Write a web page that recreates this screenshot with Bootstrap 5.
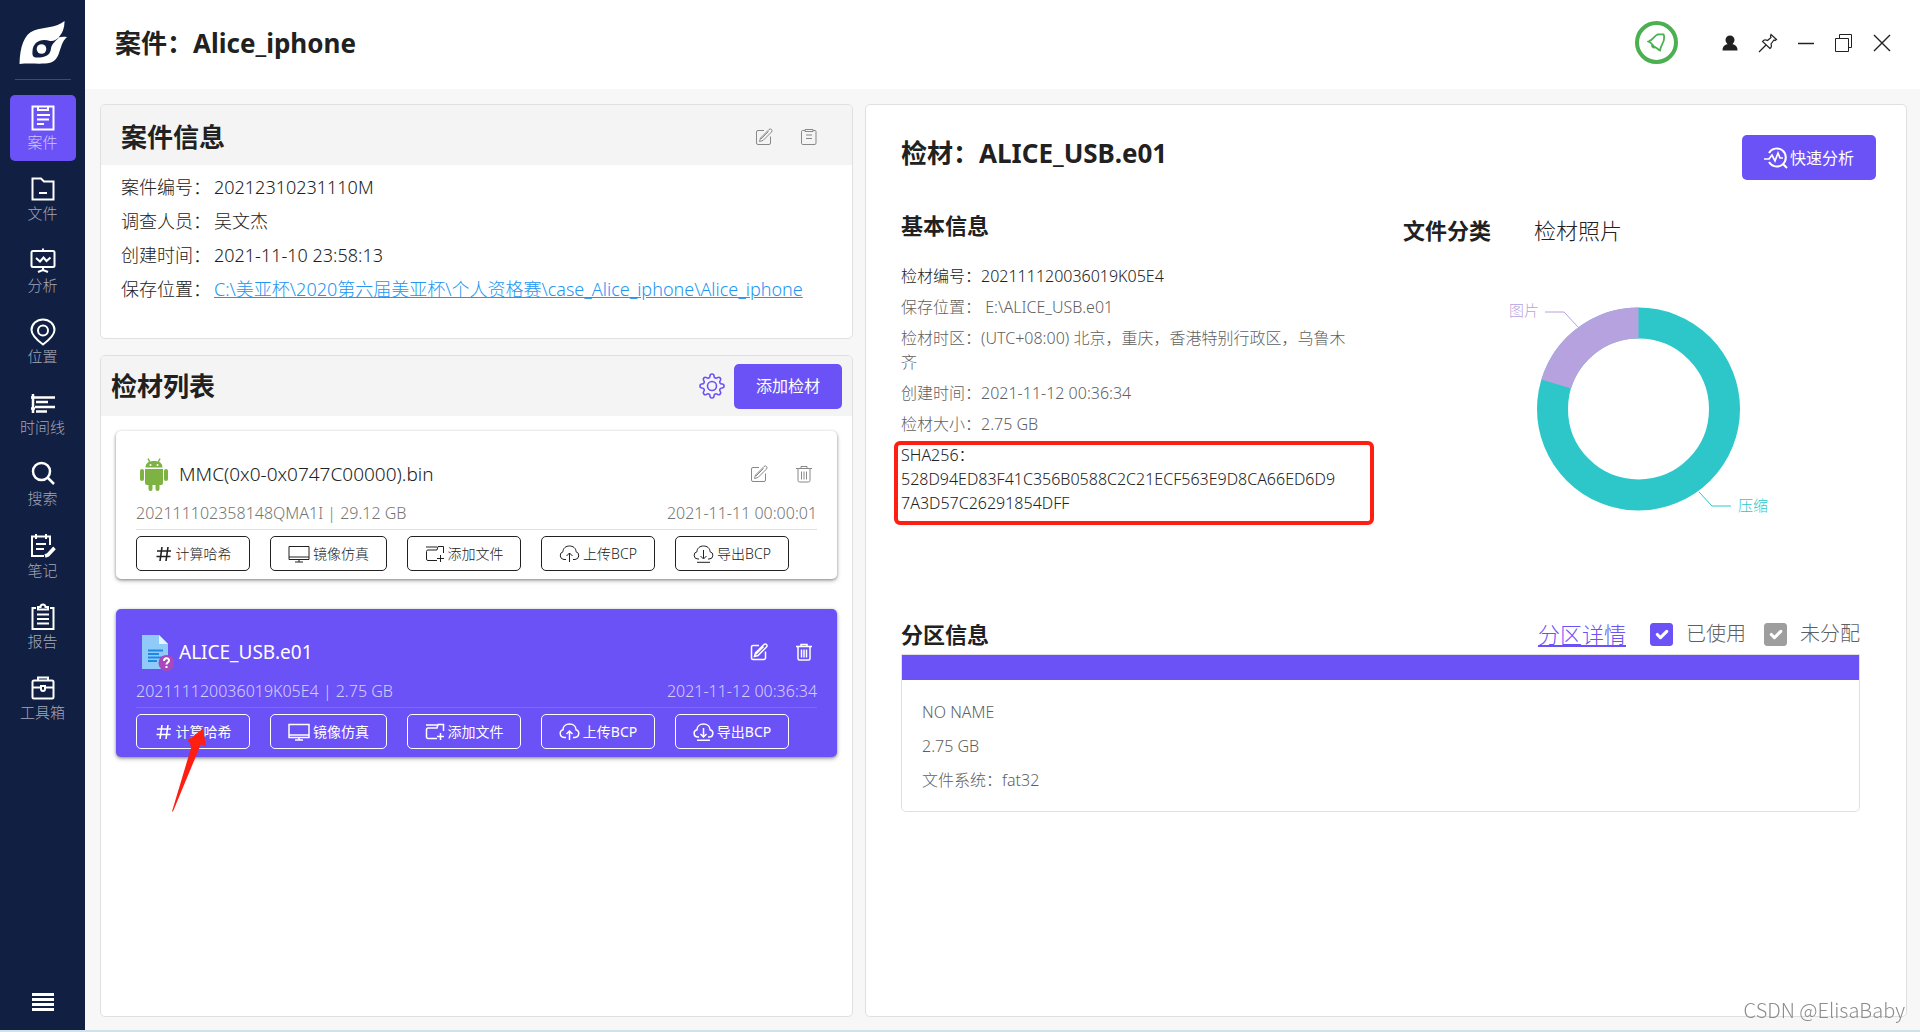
<!DOCTYPE html>
<html lang="zh-CN">
<head>
<meta charset="utf-8">
<meta name="viewport" content="width=device-width, initial-scale=1">
<title>案件：Alice_iphone</title>
<link rel="stylesheet" href="https://cdn.jsdelivr.net/npm/bootstrap@5.3.0/dist/css/bootstrap.min.css">
<style>
:root{--violet:#6b52f7;--navy:#111f42;--ink:#212121;--soft:#5f5f5f;--line:#e0e0e0}
body{font-family:"Noto Sans","Noto Sans CJK SC",sans-serif;font-weight:300;color:var(--ink);background:#f7f7f7;font-size:16px;line-height:24px}
svg{display:block;flex:none}
svg:not([fill]){fill:none}
svg:not([stroke]){stroke:currentColor}
h1,h2,h3,p{margin:0}
.shell{min-height:calc(100vh - 2px)}
.rail{width:85px;flex:none;background:var(--navy);padding:20px 9px 18px}
.rail-rule{width:56px;height:1px;background:#3b4a78;margin:14px 0 15px}
.rail-list{height:636px}
.rail-item{height:66px;width:66px;border-radius:5px;color:#fff;text-decoration:none;font-size:15px;line-height:20px;padding-top:9px}
.rail-item span{color:#a3a8b8}
.rail-item.active{background:var(--violet)}
.rail-item.active span{color:#d0c8fc}
.plain-btn{background:none;border:0;padding:0;color:inherit}
.topbar{height:89px;background:#fff;padding:0 28px 4px 30px}
.page-title{font-size:26px;line-height:36px;font-weight:700}
.bell{width:43px;height:43px;border:4px solid #4caf50;border-radius:50%;color:#4caf50}
.win-tools{gap:18px;margin-left:42px}
.board{display:grid;grid-template-columns:73fr 101fr;gap:12px;padding:15px 13px 13px 15px}
.panel{background:#fff;border:1px solid var(--line);border-radius:5px;overflow:hidden}
.panel-top{height:60px;background:#f4f4f4}
.case-top{padding:4px 34px 0 20px}
.case-info{font-size:18px;line-height:34px;padding:5px 20px 32px}
.case-info dt{font-weight:300;width:93px}
.case-info dd{margin:0}
.path-link{color:#2196f3}
.list-head{padding:0 10px}
.gear-btn{margin-right:8px}
.violet-btn{background:var(--violet);color:#fff;border:0;border-radius:5px;height:45px;font-size:16px;font-weight:400}
.violet-btn:hover{background:#5a40ea;color:#fff}
.add-btn{width:108px}
.device-list{padding:15px;gap:30px}
.device{height:148px;border-radius:5px;background:#fff;box-shadow:0 1px 3px rgba(0,0,0,.35),0 2px 5px rgba(0,0,0,.2);padding:24px 20px 8px}
.device.picked{background:var(--violet);color:#fff;font-weight:400}
.device-name{font-size:19px;line-height:38px;height:38px}
.name-icon{margin:0 9px 0 2px}
.picked .name-icon{margin-right:5px}
.device-meta{color:#757575;height:37px;padding-top:8px;border-bottom:1px solid var(--line);font-size:16px;font-weight:300}
.device-tools{color:#888}
.device .device-tools{padding-right:4px}
.tool-gap{margin-right:27px}
.picked .device-meta{color:#d6cffd;border-color:#7d68f8}
.picked .device-tools{color:#fff}
.op-row{gap:20px;padding-top:6px}
.op-btn{height:35px;width:114px;border:1px solid var(--ink);border-radius:5px;background:none;color:inherit;padding:0;font-size:14px;gap:3px;font-weight:inherit}
.op-btn.op-wide{width:117px}
.picked .op-btn{border-color:#fff}
.red-arrow{left:55px;top:119px}
.detail{padding:30px 30px 30px 35px}
.quick-btn{width:134px;padding:0;gap:2px}
.sub-title{font-size:22px;line-height:30px;font-weight:700}
.facts-row{margin-top:30px}
.facts{color:var(--soft);margin-top:24px}
.facts p{margin-bottom:7px}
.facts .dark{color:var(--ink)}
.facts-box{width:455px}
.hash-frame{left:-7px;right:-18px;top:-2px;bottom:-10px;border:4px solid #ff1e12;border-radius:6px}
.chart-box{margin-left:47px;padding-top:5px}
.tab-row{gap:43px}
.tab-link{font-size:22px;line-height:30px;color:var(--ink);background:none;border:0;padding:0}
.donut{margin:55px 0 0 97px}
.chart-label{font-size:15px;stroke:none}
.part-head{margin-right:16px;height:40px;margin-top:92px}
.part-link{font-size:22px;color:var(--violet)}
.part-check{font-size:20px;color:var(--soft);gap:13px;margin-left:24px}
.part-check.part-last{margin-left:18px}
.part-check .form-check-input{width:23px;height:23px;margin:0;border-radius:3px}
.part-check .form-check-input:checked{background-color:var(--violet);border-color:var(--violet)}
.part-check .form-check-input.muted-check:checked{background-color:#9e9e9e;border-color:#9e9e9e}
.part-box{border:1px solid var(--line);border-radius:0 0 5px 5px;margin-right:16px;color:var(--soft);line-height:34px}
.part-bar{height:25px;background:var(--violet)}
.part-text{padding:15px 20px 14px}
.watermark{right:15px;bottom:9px;font-size:20px;line-height:26px;color:#8c8c8c;font-family:"Noto Sans CJK SC",sans-serif}
.taskbar{height:2px;background:#cfe2ea}
</style>
</head>
<body>
<svg width="0" height="0" class="position-absolute" aria-hidden="true">
<defs>
<symbol id="edit" viewBox="0 0 18 18"><path d="M9 2.500H3A1.500 1.500 0 0 0 1.500 4v11A1.500 1.500 0 0 0 3 16.500h11a1.500 1.500 0 0 0 1.500-1.500V8.500M4.500 13.500l1-3.500 8.500-8.500a1.700 1.700 0 0 1 2.500 2.500L8 12.500zM6 11l7.500-7.500"/></symbol>
<symbol id="trash" viewBox="0 0 18 18"><path d="M1 3.500h16M6 3V1.500h6V3M3 4v11.500A1.500 1.500 0 0 0 4.500 17h9a1.500 1.500 0 0 0 1.500-1.500V4M6.500 6.500v8M9 6.500v8M11.500 6.500v8"/></symbol>
<symbol id="hash" viewBox="0 0 18 18"><path d="M7 2 5 16M13 2l-2 14M2 6h14M1.500 11.500h14" stroke-width="1.600"/></symbol>
<symbol id="screen" viewBox="0 0 22 18"><path d="M1 1.500h20v13H1zM1 12h20M11 14.500V17M7 17h8"/></symbol>
<symbol id="addfile" viewBox="0 0 20 18"><path d="M1 2h11M12 15.500H3A1.500 1.500 0 0 1 1.500 14V6.500A1.500 1.500 0 0 1 3 5h9l1-3.500h5.500V8M15.500 10v7M12 13.500h7"/></symbol>
<symbol id="cloudup" viewBox="0 0 21 18"><path d="M7 14.500H5a4 4 0 0 1-1-7.800C4 3 7 1 10.500 1S17 3 17 6.700a4 4 0 0 1-1 7.800h-2M10.500 17V8M7.500 11l3-3 3 3"/></symbol>
<symbol id="clouddown" viewBox="0 0 21 18"><path d="M6 14H5a3.700 3.700 0 0 1-1-7.300C4 3 7 1 10.500 1S17 3 17 6.700a3.700 3.700 0 0 1-1 7.300h-1M10.500 5v8.500M7.500 11l3 3 3-3M4 17.300h13"/></symbol>
</defs>
</svg>
<div class="shell d-flex">
<nav class="rail d-flex flex-column align-items-center">
  <svg width="50" height="45" viewBox="18 21 50 45" stroke="none"><path fill="#fff" d="M19.500 65C20 48 24 35 34 31.500 44 28 56 29 64.500 22c0 7-2 12-6 16.500 3-1 5.500-1 8.500-.5-5 4-6 11-8.500 17.500C56 61 53 64 45 64.500c-8 .5-17-.5-25.500.5z"/><path fill="#111f42" d="M59 38.500c-3 2-5 4-9 3.500-9-3-17 1-17.500 10-.5 6 1 7 7 6.500 8-.5 11-4 11.500-9 .5-4 4-7 8-11z"/><circle cx="41.500" cy="50" r="4.800" fill="#fff"/></svg>
  <div class="rail-rule"></div>
  <div class="rail-list d-flex flex-column justify-content-between text-center">
    <a href="#" class="rail-item active d-flex flex-column align-items-center"><svg width="26" height="28" viewBox="0 0 26 28" stroke-width="2"><path d="M2.500 2.500h21v23h-21zM8 3v3h10V3M7 11h13M7 15.500h12M7 20h7"/></svg><span>案件</span></a>
    <a href="#" class="rail-item d-flex flex-column align-items-center"><svg width="26" height="28" viewBox="0 0 26 28" stroke-width="2"><path d="M2.500 3.500h8.500l3 3h9.500v18h-21zM9 18h8"/></svg><span>文件</span></a>
    <a href="#" class="rail-item d-flex flex-column align-items-center"><svg width="26" height="28" viewBox="0 0 26 28" stroke-width="2"><rect x="1.500" y="4" width="23" height="16" rx="1.500"/><path d="m6 11 4 3.500 3.500-4 3 3.500 4-3.500M13 1.500V4M13 20v4M8 25l5-2 5 2"/></svg><span>分析</span></a>
    <a href="#" class="rail-item d-flex flex-column align-items-center"><svg width="26" height="28" viewBox="0 0 26 28" stroke-width="2"><path d="M13 26.500C7 22 1.500 17 1.500 12a11.500 10.500 0 0 1 23 0c0 5-5.500 10-11.500 14.500z"/><circle cx="13" cy="12.500" r="5"/></svg><span>位置</span></a>
    <a href="#" class="rail-item d-flex flex-column align-items-center"><svg width="26" height="28" viewBox="0 0 26 28" stroke-width="2.500"><path d="M3 5v19M1 8.500h5M1 19.500h4M5 8.500h20M6 13h12M5 18h20M6 22.500h11"/></svg><span>时间线</span></a>
    <a href="#" class="rail-item d-flex flex-column align-items-center"><svg width="26" height="28" viewBox="0 0 26 28" stroke-width="2.500"><circle cx="11.500" cy="11.500" r="8.500"/><path d="m17.500 17.500 6.500 6.500"/></svg><span>搜索</span></a>
    <a href="#" class="rail-item d-flex flex-column align-items-center"><svg width="26" height="28" viewBox="0 0 26 28" stroke-width="2"><path d="M20 13V4.500H2V24h12M6 2v5M16 2v5M6 12h10M6 17h8M17 23l7-7.500" /><path d="m15 24 3-1 6.500-7" stroke-width="3.500"/></svg><span>笔记</span></a>
    <a href="#" class="rail-item d-flex flex-column align-items-center"><svg width="26" height="28" viewBox="0 0 26 28" stroke-width="2"><path d="M6 5H2.500v21h21V5H20M8 6.500V4h2.500a2.500 2.500 0 0 1 5 0H18v2.500zM7 11.500h12M7 16h12M7 20.500h12"/></svg><span>报告</span></a>
    <a href="#" class="rail-item d-flex flex-column align-items-center"><svg width="26" height="28" viewBox="0 0 26 28" stroke-width="2"><rect x="2.500" y="6.500" width="21" height="18" rx="1.500"/><path d="M8 6V3.500h10V6M3 13.500h8M15 13.500h8M11 12v3a2 2 0 0 0 4 0v-3z"/></svg><span>工具箱</span></a>
  </div>
  <button class="plain-btn text-white mt-auto" aria-label="菜单"><svg width="22" height="20" viewBox="0 0 22 20" stroke-width="3"><path d="M0 2.500h22M0 7.500h22M0 12.500h22M0 17.500h22"/></svg></button>
</nav>
<div class="flex-grow-1 d-flex flex-column">
  <header class="topbar d-flex align-items-center">
    <h1 class="page-title me-auto">案件：Alice_iphone</h1>
    <button class="plain-btn bell d-flex align-items-center justify-content-center" aria-label="通知"><svg width="19" height="19" viewBox="0 0 19 19" stroke-width="1.800"><path d="M1.500 8.500C6 7 7 3 10.500 1.500 14 1 15 1.500 16.500 1.500c1 1 .5 2.500.5 4.500 0 4-3 5-4 11.500-2-1-3-2.500-5-3.500-2.500-.5-1.500-3-6.500-5.500zM5 12c0 2 1 3 3 2.500"/></svg></button>
    <div class="win-tools d-flex align-items-center">
      <button class="plain-btn" aria-label="用户"><svg width="20" height="20" viewBox="0 0 20 20" stroke="none" fill="#212121"><circle cx="10" cy="7" r="4.500"/><path d="M2.500 17.500c0-5 3-6.500 7.500-6.500s7.500 1.500 7.500 6.500z"/></svg></button>
      <button class="plain-btn" aria-label="固定"><svg width="20" height="20" viewBox="0 0 20 20" stroke-width="1.200"><path d="m13 1.500 5.500 5-1.500 1-1-.5-3 4c1 2 0 4-1 4.500L4.500 8.500c1-1.500 3-2 5-1l3.500-3-.5-1.500zM8 12l-7 7"/></svg></button>
      <button class="plain-btn" aria-label="最小化"><svg width="20" height="20" viewBox="0 0 20 20"><path d="M2 10.500h16" stroke-width="1.500"/></svg></button>
      <button class="plain-btn" aria-label="还原"><svg width="20" height="20" viewBox="0 0 20 20"><path d="M1.500 5.500h13v13h-13zM5.500 5V1.500h12v13H15"/></svg></button>
      <button class="plain-btn" aria-label="关闭"><svg width="20" height="20" viewBox="0 0 20 20" stroke-width="1.400"><path d="m2 2 16 16M18 2 2 18"/></svg></button>
    </div>
  </header>
  <main class="board flex-grow-1">
    <div class="d-flex flex-column gap-3">
      <section class="panel">
        <div class="panel-top case-top d-flex align-items-center">
          <h2 class="page-title me-auto">案件信息</h2>
          <div class="device-tools d-flex">
            <button class="plain-btn tool-gap" aria-label="编辑"><svg width="18" height="18"><use href="#edit"/></svg></button>
            <button class="plain-btn" aria-label="复制"><svg width="18" height="18" viewBox="0 0 18 18"><path d="M5 2.500H2.500A1 1 0 0 0 1.500 3.500v12a1.500 1.500 0 0 0 1.500 1h12a1.500 1.500 0 0 0 1-1.500V3.500a1 1 0 0 0-1-1H13M5 1.500h8v2H5zM6 7h6M6 10.500h6"/></svg></button>
          </div>
        </div>
        <dl class="case-info mb-0">
          <div class="d-flex"><dt>案件编号：</dt><dd>20212310231110M</dd></div>
          <div class="d-flex"><dt>调查人员：</dt><dd>吴文杰</dd></div>
          <div class="d-flex"><dt>创建时间：</dt><dd>2021-11-10 23:58:13</dd></div>
          <div class="d-flex"><dt>保存位置：</dt><dd><a href="#" class="path-link">C:\美亚杯\2020第六届美亚杯\个人资格赛\case_Alice_iphone\Alice_iphone</a></dd></div>
        </dl>
      </section>
      <section class="panel flex-grow-1">
        <div class="panel-top list-head d-flex align-items-center">
          <h2 class="page-title me-auto">检材列表</h2>
          <button class="plain-btn gear-btn" aria-label="设置"><svg width="28" height="28" viewBox="0 0 28 28" stroke="#6b52f7" stroke-width="1.600"><circle cx="14" cy="14" r="4.500"/><path d="M12 4a2 2 0 0 1 4 0c0 2 2 3 3.500 1.700a2 2 0 0 1 2.800 2.800C21 10 22 12 24 12a2 2 0 0 1 0 4c-2 0-3 2-1.700 3.500a2 2 0 0 1-2.800 2.800C18 21 16 22 16 24a2 2 0 0 1-4 0c0-2-2-3-3.500-1.700a2 2 0 0 1-2.800-2.800C7 18 6 16 4 16a2 2 0 0 1 0-4c2 0 3-2 1.700-3.500a2 2 0 0 1 2.800-2.800C10 7 12 6 12 4z"/></svg></button>
          <button class="btn violet-btn add-btn">添加检材</button>
        </div>
        <div class="device-list d-flex flex-column">
          <article class="device">
            <div class="device-name d-flex align-items-center">
              <svg class="name-icon" width="32" height="38" viewBox="0 0 32 38" stroke="none" fill="#7cb342"><path d="M7.500 12.500C7.500 8 11 6 16 6s8.500 2 8.500 6.500zM7 14h18v14a2 2 0 0 1-2 2H9a2 2 0 0 1-2-2zM10.500 29h4v5a2 2 0 0 1-4 0zM17.500 29h4v5a2 2 0 0 1-4 0z"/><rect x="2" y="14" width="4" height="12" rx="2"/><rect x="26" y="14" width="4" height="12" rx="2"/><path stroke="#7cb342" stroke-width="1.500" d="m10 3.500 2 4M22 3.500l-2 4"/><g fill="#fff"><circle cx="12.500" cy="10" r="1"/><circle cx="19.500" cy="10" r="1"/></g></svg>
              <span class="me-auto">MMC(0x0-0x0747C00000).bin</span>
              <div class="device-tools d-flex"><button class="plain-btn tool-gap" aria-label="编辑"><svg width="18" height="18"><use href="#edit"/></svg></button><button class="plain-btn" aria-label="删除"><svg width="18" height="18"><use href="#trash"/></svg></button></div>
            </div>
            <div class="device-meta d-flex justify-content-between"><span>202111102358148QMA1I | 29.12 GB</span><span>2021-11-11 00:00:01</span></div>
            <div class="op-row d-flex">
              <button class="op-btn d-flex align-items-center justify-content-center"><svg width="18" height="18"><use href="#hash"/></svg>计算哈希</button>
              <button class="op-btn op-wide d-flex align-items-center justify-content-center"><svg width="22" height="18"><use href="#screen"/></svg>镜像仿真</button>
              <button class="op-btn d-flex align-items-center justify-content-center"><svg width="20" height="18"><use href="#addfile"/></svg>添加文件</button>
              <button class="op-btn d-flex align-items-center justify-content-center"><svg width="21" height="18"><use href="#cloudup"/></svg>上传BCP</button>
              <button class="op-btn d-flex align-items-center justify-content-center"><svg width="21" height="18"><use href="#clouddown"/></svg>导出BCP</button>
            </div>
          </article>
          <article class="device picked position-relative">
            <div class="device-name d-flex align-items-center">
              <svg class="name-icon" width="36" height="38" viewBox="0 0 36 38" stroke="none"><path fill="#90caf9" d="M4 2h17l9 9v25H4z"/><path fill="#e1f5fe" d="M21 2v9h9z"/><path stroke="#1e88e5" stroke-width="1.800" d="M10 17.500h15M10 21h11M10 24.500h15M10 28h9"/><circle cx="28.500" cy="30" r="8" fill="#ab47bc"/><path stroke="#fff" stroke-width="2" d="M26 28c0-3.500 5-3.500 5-.5 0 2-2.500 2-2.500 4M28.500 33v2"/></svg>
              <span class="me-auto">ALICE_USB.e01</span>
              <div class="device-tools d-flex"><button class="plain-btn tool-gap" aria-label="编辑"><svg width="18" height="18" stroke-width="1.500"><use href="#edit"/></svg></button><button class="plain-btn" aria-label="删除"><svg width="18" height="18" stroke-width="1.500"><use href="#trash"/></svg></button></div>
            </div>
            <div class="device-meta d-flex justify-content-between"><span>202111120036019K05E4 | 2.75 GB</span><span>2021-11-12 00:36:34</span></div>
            <div class="op-row d-flex">
              <button class="op-btn d-flex align-items-center justify-content-center"><svg width="18" height="18"><use href="#hash"/></svg>计算哈希</button>
              <button class="op-btn op-wide d-flex align-items-center justify-content-center"><svg width="22" height="18" stroke-width="1.500"><use href="#screen"/></svg>镜像仿真</button>
              <button class="op-btn d-flex align-items-center justify-content-center"><svg width="20" height="18" stroke-width="1.500"><use href="#addfile"/></svg>添加文件</button>
              <button class="op-btn d-flex align-items-center justify-content-center"><svg width="21" height="18" stroke-width="1.500"><use href="#cloudup"/></svg>上传BCP</button>
              <button class="op-btn d-flex align-items-center justify-content-center"><svg width="21" height="18" stroke-width="1.500"><use href="#clouddown"/></svg>导出BCP</button>
            </div>
            <svg class="red-arrow position-absolute" width="36" height="84" viewBox="171 728 36 84" stroke="none" fill="#ff1e12"><path d="m203 728.500 3 18.500-5-3-28 67.500h-1L191 748l-1-5.500-3-1.500z"/></svg>
          </article>
        </div>
      </section>
    </div>
    <section class="panel detail">
      <div class="d-flex align-items-start justify-content-between">
        <h2 class="page-title">检材：ALICE_USB.e01</h2>
        <button class="btn violet-btn quick-btn d-flex align-items-center justify-content-center"><svg width="24" height="22" viewBox="0 0 24 22" stroke-width="2"><path d="M5 6a9 9 0 1 1 0 9M19 17l4 4"/><path d="M0 12h5l3-4 3 6 3-8 2 5h3" stroke-width="1.700"/></svg>快速分析</button>
      </div>
      <div class="d-flex facts-row">
        <div class="facts-box">
          <h3 class="sub-title">基本信息</h3>
          <div class="facts">
            <p class="dark">检材编号：202111120036019K05E4</p>
            <p>保存位置：&nbsp;E:\ALICE_USB.e01</p>
            <p>检材时区：(UTC+08:00) 北京，重庆，香港特别行政区，乌鲁木<br>齐</p>
            <p>创建时间：2021-11-12 00:36:34</p>
            <p>检材大小：2.75 GB</p>
            <p class="dark position-relative">SHA256：<br>528D94ED83F41C356B0588C2C21ECF563E9D8CA66ED6D9<br>7A3D57C26291854DFF<span class="hash-frame position-absolute"></span></p>
          </div>
        </div>
        <div class="chart-box">
          <div class="d-flex tab-row"><button class="tab-link fw-bold">文件分类</button><button class="tab-link fw-light">检材照片</button></div>
          <svg class="donut" width="290" height="220" viewBox="1500 300 290 220" role="img" aria-label="文件分类">
            <circle cx="1638.500" cy="409" r="86" stroke="#2ec7c9" stroke-width="31"/>
            <path d="M1638.500 323a86 86 0 0 0-82.300 61.100" stroke="#b6a2de" stroke-width="31"/>
            <path d="M1545 312h19l14 15" stroke="#b6a2de"/><path d="m1699 492 13 14h19" stroke="#2ec7c9"/>
            <text x="1509" y="316" class="chart-label" fill="#b6a2de">图片</text><text x="1738" y="511" class="chart-label" fill="#2ec7c9">压缩</text>
          </svg>
        </div>
      </div>
      <div class="d-flex align-items-center part-head">
        <h3 class="sub-title me-auto">分区信息</h3>
        <a href="#" class="part-link">分区详情</a>
        <label class="part-check d-flex align-items-center"><input type="checkbox" class="form-check-input" checked>已使用</label>
        <label class="part-check part-last d-flex align-items-center"><input type="checkbox" class="form-check-input muted-check" checked>未分配</label>
      </div>
      <div class="part-box">
        <div class="part-bar"></div>
        <div class="part-text"><div>NO NAME</div><div>2.75 GB</div><div>文件系统：fat32</div></div>
      </div>
    </section>
  </main>
</div>
</div>
<div class="taskbar"></div>
<div class="watermark position-fixed">CSDN @ElisaBaby</div>
<script src="https://cdn.jsdelivr.net/npm/bootstrap@5.3.0/dist/js/bootstrap.bundle.min.js"></script>
</body>
</html>
